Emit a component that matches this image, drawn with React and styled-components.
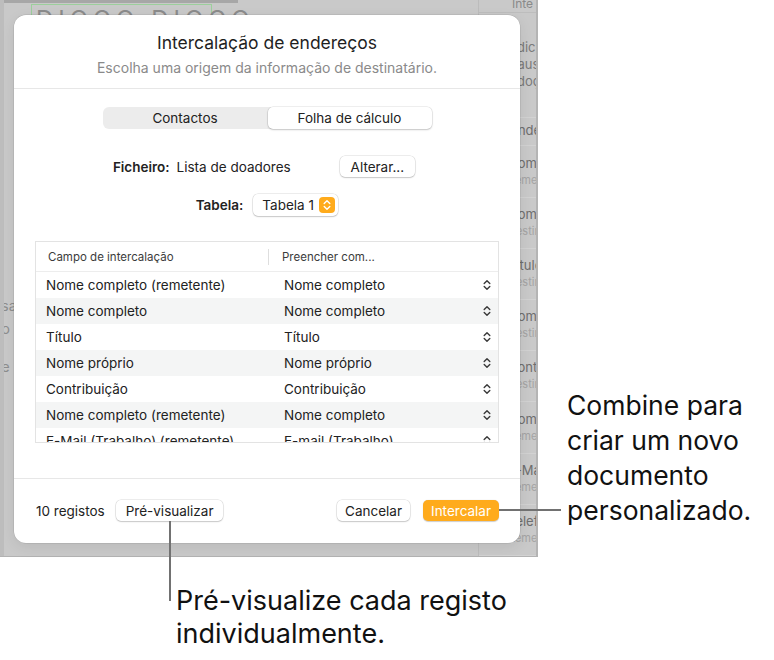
import React from 'react';
import styled, { createGlobalStyle } from 'styled-components';

/***************************************
  GLOBAL
***************************************/

const GlobalStyle = createGlobalStyle`
  html, body {
    margin: 0;
    padding: 0;
    background: #ffffff;
  }
  body {
    font-family: Inter, "Liberation Sans", sans-serif;
    -webkit-font-smoothing: antialiased;
    color: #1d1d1d;
  }
`;

const Canvas = styled.div`
  position: relative;
  width: 774px;
  height: 660px;
  overflow: hidden;
`;

/***************************************
  BACKGROUND APP (dimmed)
***************************************/

const Backdrop = styled.div`
  box-sizing: border-box;
  display: grid;
  grid-template-columns: 478px 58px;
  width: 538px;
  height: 557px;
  background: #c9c9c9;
  border-right: 2px solid #b4b4b4;
  border-bottom: 1px solid #b2b2b2;
  overflow: hidden;
`;

const DocArea = styled.div`
  border-left: 4px solid #bdbdbd;
  display: flex;
  flex-direction: column;
  overflow: hidden;
`;

const TopRule = styled.div`
  height: 3px;
  background: linear-gradient(to right, #a7a7a7 0 234px, transparent 234px);
`;

const NameBox = styled.div`
  margin: 1px 0 0 27px;
  width: 181px;
  height: 40px;
  box-sizing: border-box;
  border: 1px solid #9ccf9c;
  padding-left: 4px;
  font-size: 24px;
  line-height: 30px;
  letter-spacing: 5px;
  color: #8c8c8c;
  white-space: nowrap;
`;

const DocText = styled.div`
  margin-top: 250px;
  margin-left: -11px;
  font-size: 14px;
  line-height: 23px;
  color: #8e8e8e;
`;

const DocLine = styled.div`
  height: ${(p) => p.$h || 23}px;
  white-space: nowrap;
`;

const Sidebar = styled.div`
  display: flex;
  flex-direction: column;
  border-left: 1px solid #bcbcbc;
  overflow: hidden;
`;

const SideTab = styled.div`
  height: 13px;
  padding-left: 33px;
  font-size: 12px;
  line-height: 8px;
  color: #8a8a8a;
  border-bottom: 1px solid #bdbdbd;
  white-space: nowrap;
`;

const SideNote = styled.div`
  padding: 26px 0 0 29px;
  height: 108px;
  box-sizing: border-box;
  font-size: 13px;
  line-height: 17px;
  color: #7a7a7a;
  white-space: nowrap;
  border-bottom: 1px solid #d2d2d2;
`;

const SideItem = styled.div`
  display: grid;
  grid-template-columns: 29px 1fr;
  align-items: end;
  height: ${(p) => p.$h || 53}px;
  box-sizing: border-box;
  padding-bottom: ${(p) => (p.$h ? 6 : 8)}px;
  border-bottom: 1px solid #d2d2d2;
  white-space: nowrap;
`;

const SideDot = styled.span`
  width: 10px;
  height: 10px;
  margin: 0 0 4px 5px;
  border-radius: 50%;
  background: ${(p) => (p.$on ? '#7fb77f' : 'transparent')};
`;

const SideTitle = styled.div`
  font-size: 13px;
  line-height: 17px;
  color: #6e6e6e;
`;

const SideSub = styled.div`
  font-size: 11px;
  line-height: 17px;
  color: #a4a4a4;
`;

/***************************************
  DIALOG
***************************************/

const Dialog = styled.div`
  position: absolute;
  left: 14px;
  top: 15px;
  width: 506px;
  height: 528px;
  border-radius: 12px;
  background: #ffffff;
  box-shadow: 0 0 0 0.5px rgba(0, 0, 0, 0.12), 0 4px 14px rgba(0, 0, 0, 0.08);
  display: flex;
  flex-direction: column;
  overflow: hidden;
`;

const Header = styled.div`
  padding: 17px 0 11px;
  text-align: center;
  border-bottom: 1px solid #e7e7e7;
`;

const Title = styled.div`
  font-size: 17.5px;
  line-height: 22px;
  color: #1f1f1f;
`;

const Subtitle = styled.div`
  margin-top: 5px;
  font-size: 14px;
  line-height: 18px;
  color: #8a8a8a;
`;

const Body = styled.div`
  flex: 1;
  padding: 18px 21px 35px;
  display: flex;
  flex-direction: column;
  align-items: center;
  border-bottom: 1px solid #e7e7e7;
`;

const Segmented = styled.div`
  display: grid;
  grid-template-columns: 165px 164px;
  height: 22px;
  border-radius: 6px;
  background: #ececec;
`;

const Segment = styled.div`
  display: flex;
  align-items: center;
  justify-content: center;
  font-size: 13.5px;
  color: #222;
  border-radius: 5px;
  background: ${(p) => (p.$active ? '#ffffff' : 'transparent')};
  box-shadow: ${(p) => (p.$active ? '0 0 0 0.5px rgba(0,0,0,0.12), 0 1px 2px rgba(0,0,0,0.18)' : 'none')};
`;

const FieldRow = styled.div`
  display: flex;
  align-items: center;
  margin-top: ${(p) => p.$top}px;
  height: ${(p) => p.$h}px;
  padding-right: ${(p) => p.$shift || 0}px;
`;

const FieldLabel = styled.span`
  font-size: 13.5px;
  font-weight: 600;
  color: #222;
`;

const FieldValue = styled.span`
  font-size: 13.5px;
  color: #222;
  margin-left: 7px;
  width: 163px;
`;

const Button = styled.button`
  height: 21px;
  padding: 0 ${(p) => p.$pad || 10}px;
  border: none;
  border-radius: 5px;
  font-family: inherit;
  font-size: 13.5px;
  color: ${(p) => (p.$primary ? '#ffffff' : '#222')};
  background: ${(p) => (p.$primary ? '#ffab1c' : '#ffffff')};
  box-shadow: ${(p) =>
    p.$primary
      ? '0 0.5px 1px rgba(0,0,0,0.2)'
      : '0 0 0 0.5px rgba(0,0,0,0.14), 0 1px 1.5px rgba(0,0,0,0.16)'};
`;

const Popup = styled.div`
  display: flex;
  align-items: center;
  margin-left: 10px;
  width: 85px;
  height: 22px;
  box-sizing: border-box;
  padding: 0 3px 0 9px;
  border-radius: 5px;
  background: #ffffff;
  box-shadow: 0 0 0 0.5px rgba(0, 0, 0, 0.14), 0 1px 1.5px rgba(0, 0, 0, 0.16);
  font-size: 13.5px;
  color: #222;
  justify-content: space-between;
`;

const Stepper = styled.span`
  display: flex;
  align-items: center;
  justify-content: center;
  width: 16px;
  height: 16px;
  border-radius: 4px;
  background: #ffab1c;
`;

const Table = styled.div`
  align-self: stretch;
  margin-top: 25px;
  height: 202px;
  box-sizing: border-box;
  border: 1px solid #e3e3e3;
  overflow: hidden;
`;

const HeadRow = styled.div`
  display: grid;
  grid-template-columns: 232px 1fr;
  align-items: center;
  height: 29px;
  font-size: 11.5px;
  color: #3c3c3c;
  border-bottom: 1px solid #ededed;
`;

const HeadCell = styled.div`
  padding-left: ${(p) => (p.$second ? 13 : 12)}px;
  border-left: ${(p) => (p.$second ? '1px solid #dedede' : 'none')};
  line-height: 16px;
`;

const Row = styled.div`
  display: grid;
  grid-template-columns: 232px 1fr 15px;
  align-items: center;
  height: 26px;
  font-size: 13.5px;
  color: #222;
  background: ${(p) => (p.$striped ? '#f4f5f5' : '#ffffff')};
`;

const Cell = styled.div`
  padding-left: ${(p) => (p.$second ? 16 : 10)}px;
  white-space: nowrap;
`;

const Footer = styled.div`
  display: flex;
  align-items: center;
  padding: 21px 21px 22px;
`;

const Count = styled.span`
  font-size: 13.5px;
  color: #222;
  margin-left: 1px;
  margin-right: 11px;
`;

const Spacer = styled.div`
  flex: 1;
`;

const ButtonGap = styled.div`
  width: 13px;
`;

/***************************************
  CALLOUTS
***************************************/

const Leader = styled.div`
  position: absolute;
  background: #717171;
  left: ${(p) => p.$x}px;
  top: ${(p) => p.$y}px;
  width: ${(p) => p.$w}px;
  height: ${(p) => p.$h}px;
`;

const Callout = styled.div`
  position: absolute;
  left: ${(p) => p.$x}px;
  top: ${(p) => p.$y}px;
  font-size: ${(p) => p.$size}px;
  line-height: ${(p) => p.$lh}px;
  color: #111;
  white-space: nowrap;
`;

/***************************************
  DATA
***************************************/

const rows = [
  ['Nome completo (remetente)', 'Nome completo'],
  ['Nome completo', 'Nome completo'],
  ['Título', 'Título'],
  ['Nome próprio', 'Nome próprio'],
  ['Contribuição', 'Contribuição'],
  ['Nome completo (remetente)', 'Nome completo'],
  ['E-Mail (Trabalho) (remetente)', 'E-mail (Trabalho)'],
];

const sideItems = [
  ['Onde', ''],
  ['Nome completo', 'Remetente'],
  ['Nome completo', 'Destinatário'],
  ['Título', 'Destinatário'],
  ['Nome próprio', 'Destinatário'],
  ['Contribuição', 'Destinatário'],
  ['Nome completo', 'Remetente'],
  ['E-Mail', 'Remetente'],
  ['Telefone', 'Remetente'],
];

const Chevrons = ({ color = '#3a3a3a' }) => (
  <svg width="8" height="12" viewBox="0 0 8 12">
    <path
      d="M1.2 4.6 L4 1.8 L6.8 4.6 M1.2 7.4 L4 10.2 L6.8 7.4"
      fill="none"
      stroke={color}
      strokeWidth="1.4"
      strokeLinecap="round"
      strokeLinejoin="round"
    />
  </svg>
);

/***************************************
  MAIN
***************************************/

const App = () => (
  <Canvas>
    <GlobalStyle />

    <Backdrop>
      <DocArea>
        <TopRule />
        <NameBox>DIOGO DIOGO</NameBox>
        <DocText>
          <DocLine>usar</DocLine>
          <DocLine>do</DocLine>
          <DocLine $h={15} />
          <DocLine>de p</DocLine>
        </DocText>
      </DocArea>
      <Sidebar>
        <SideTab>Inte</SideTab>
        <SideNote>
          <div>Adicione</div>
          <div>Causa</div>
          <div>Adoção</div>
        </SideNote>
        {sideItems.map(([t, s], i) => (
          <SideItem key={i} $h={i === 0 ? 29 : undefined}>
            <SideDot $on={i === sideItems.length - 1} />
            <div>
              <SideTitle>{t}</SideTitle>
              {s && <SideSub>{s}</SideSub>}
            </div>
          </SideItem>
        ))}
      </Sidebar>
    </Backdrop>

    <Dialog>
      <Header>
        <Title>Intercalação de endereços</Title>
        <Subtitle>Escolha uma origem da informação de destinatário.</Subtitle>
      </Header>

      <Body>
        <Segmented>
          <Segment>Contactos</Segment>
          <Segment $active>Folha de cálculo</Segment>
        </Segmented>

        <FieldRow $top={27} $h={21} $shift={6}>
          <FieldLabel>Ficheiro:</FieldLabel>
          <FieldValue>Lista de doadores</FieldValue>
          <Button $pad={11}>Alterar...</Button>
        </FieldRow>

        <FieldRow $top={17} $h={22}>
          <FieldLabel>Tabela:</FieldLabel>
          <Popup>
            Tabela 1
            <Stepper>
              <Chevrons color="#ffffff" />
            </Stepper>
          </Popup>
        </FieldRow>

        <Table>
          <HeadRow>
            <HeadCell>Campo de intercalação</HeadCell>
            <HeadCell $second>Preencher com...</HeadCell>
          </HeadRow>
          {rows.map(([field, fill], i) => (
            <Row key={i} $striped={i % 2 === 1}>
              <Cell>{field}</Cell>
              <Cell $second>{fill}</Cell>
              <Chevrons />
            </Row>
          ))}
        </Table>
      </Body>

      <Footer>
        <Count>10 registos</Count>
        <Button $pad={10}>Pré-visualizar</Button>
        <Spacer />
        <Button $pad={8}>Cancelar</Button>
        <ButtonGap />
        <Button $primary $pad={8}>Intercalar</Button>
      </Footer>
    </Dialog>

    <Leader $x={499} $y={509} $w={62} $h={2} />
    <Callout $x={567} $y={388} $lh={35} $size={26.5}>
      Combine para
      <br />
      criar um novo
      <br />
      documento
      <br />
      personalizado.
    </Callout>

    <Leader $x={169} $y={521} $w={2} $h={80} />
    <Callout $x={176} $y={584} $lh={33} $size={27}>
      Pré-visualize cada registo
      <br />
      individualmente.
    </Callout>
  </Canvas>
);

export default App;
